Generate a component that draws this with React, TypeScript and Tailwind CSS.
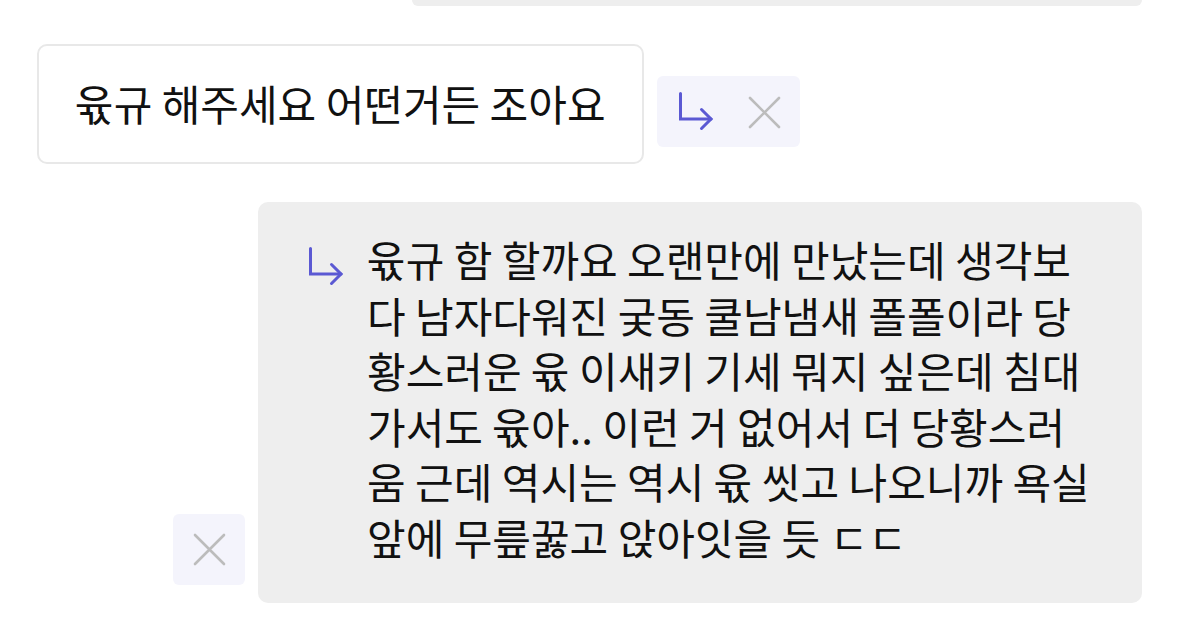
import React from 'react';

const ReplyArrow: React.FC<{ className?: string }> = ({ className }) => (
  <svg viewBox="0 0 36 40" className={className} fill="none" stroke="#5b59d3" strokeWidth={3} strokeLinecap="round" strokeLinejoin="miter">
    <path d="M2.5 1.5V27H33" />
    <path d="M23.5 17.5L33 27L23.5 36.5" />
  </svg>
);

const CloseX: React.FC<{ className?: string }> = ({ className }) => (
  <svg viewBox="0 0 33 33" className={className} fill="none" stroke="#bcbcbc" strokeWidth={2.6} strokeLinecap="round">
    <path d="M2 2L31 31M31 2L2 31" />
  </svg>
);

const lines = [
  '윣규 함 할까요 오랜만에 만났는데 생각보',
  '다 남자다워진 궂동 쿨남냄새 폴폴이라 당',
  '황스러운 윣 이새키 기세 뭐지 싶은데 침대',
  '가서도 윣아.. 이런 거 없어서 더 당황스러',
  '움 근데 역시는 역시 윣 씻고 나오니까 욕실',
  '앞에 무릎꿇고 앉아잇을 듯 ㄷㄷ',
];

const App: React.FC = () => {
  return (
    <div
      className="w-[1179px] h-[639px] overflow-hidden bg-white px-[37px] text-[#111111]"
      style={{ fontFamily: '"Noto Sans CJK KR", "Noto Sans", sans-serif' }}
    >
      {/* previous message, scrolled off the top */}
      <div className="ml-auto h-[6px] w-[730px] rounded-b-[10px] bg-[#eeeeee]" />

      <div className="mt-[38px] flex items-end gap-[13px]">
        <div className="flex h-[120px] w-[607px] items-center rounded-[10px] border-2 border-[#e8e8e8] bg-white px-[36px] pb-[3px]">
          <span className="whitespace-nowrap text-[42px] leading-none">윣규 해주세요 어떤거든 조아요</span>
        </div>
        <div className="mb-[17px] flex h-[71px] w-[143px] items-center rounded-[6px] bg-[#f4f4fc] pl-[21px]">
          <ReplyArrow className="h-[40px] w-[36px]" />
          <CloseX className="ml-[34px] mt-[2px] h-[33px] w-[33px]" />
        </div>
      </div>

      <div className="mt-[38px] flex items-end justify-end gap-[13px]">
        <div className="mb-[18px] flex h-[71px] w-[72px] items-center justify-center rounded-[6px] bg-[#f4f4fc]">
          <CloseX className="h-[33px] w-[33px]" />
        </div>
        <div className="flex h-[401px] w-[884px] items-start rounded-[10px] bg-[#eeeeee] pl-[50px] pr-[20px] pt-[29px]">
          <ReplyArrow className="mt-[16px] h-[40px] w-[36px] shrink-0" />
          <div className="ml-[23px] text-[42px] leading-[55.5px]">
            {lines.map((l) => (
              <div key={l} className="whitespace-nowrap">{l}</div>
            ))}
          </div>
        </div>
      </div>
    </div>
  );
};

export default App;
